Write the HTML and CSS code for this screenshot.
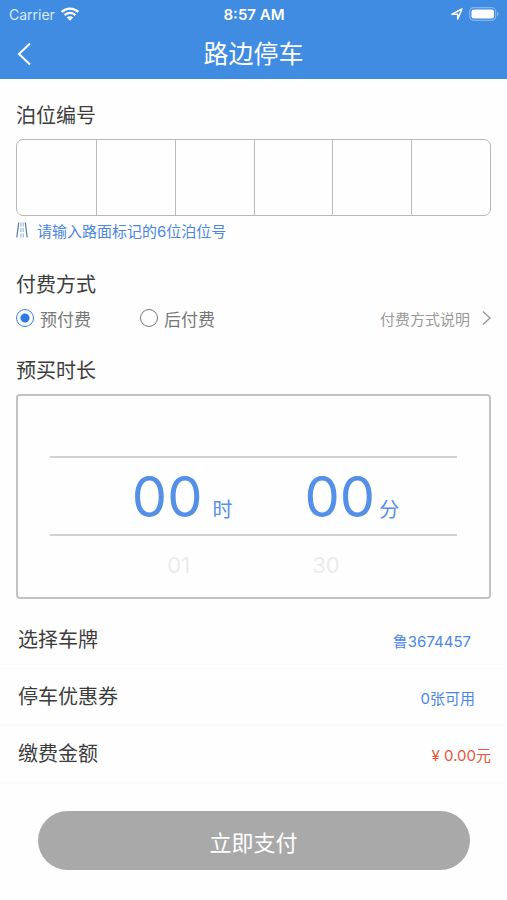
FILE: index.html
```html
<!DOCTYPE html>
<html lang="zh-CN">
<head>
<meta charset="utf-8">
<meta name="viewport" content="width=device-width, initial-scale=1">
<title>路边停车</title>
<link rel="stylesheet" href="styles.css">
</head>
<body>
<header class="header">
  <div class="status">
    <div class="status-left">
      <span>Carrier</span>
      <svg class="wifi" viewBox="0 0 18 14" aria-hidden="true">
        <path d="M.8 5a11.6 11.6 0 0 1 16.4 0M3.6 8.1a7.6 7.6 0 0 1 10.8 0" fill="none" stroke="#fff" stroke-width="2.4"/>
        <path d="M5.8 10.6a4.6 4.6 0 0 1 6.4 0L9 13.8z" fill="#fff"/>
      </svg>
    </div>
    <span class="clock">8:57 AM</span>
    <div class="status-right">
      <svg class="locate" viewBox="0 0 12 12" aria-hidden="true">
        <path d="M1 6.2L11 1L6.7 11V6.2z" fill="none" stroke="#fff" stroke-width="1.5" stroke-linejoin="round"/>
      </svg>
      <svg class="battery" viewBox="0 0 30 14" aria-hidden="true">
        <rect x=".7" y=".7" width="26" height="12.6" rx="4" fill="none" stroke="#84b6ee" stroke-width="1.2"/>
        <rect x="2.5" y="2.5" width="22.5" height="9" rx="2.3" fill="#fff"/>
        <path d="M28 4.8q1.6.7 1.6 2.2t-1.6 2.2z" fill="#84b6ee"/>
      </svg>
    </div>
  </div>
  <div class="nav">
    <button class="back" type="button" aria-label="返回">
      <svg viewBox="0 0 14 24" aria-hidden="true"><path d="M13 1.5L2 12l11 10.5" fill="none" stroke="#fff" stroke-width="2"/></svg>
    </button>
    <h1 class="title">路边停车</h1>
  </div>
</header>
<main>
  <form class="form">
    <section class="spot">
      <h2 class="label" id="spot-label">泊位编号</h2>
      <div class="cells" role="group" aria-labelledby="spot-label">
        <input class="cell" maxlength="1" inputmode="numeric" aria-label="第1位">
        <input class="cell" maxlength="1" inputmode="numeric" aria-label="第2位">
        <input class="cell" maxlength="1" inputmode="numeric" aria-label="第3位">
        <input class="cell" maxlength="1" inputmode="numeric" aria-label="第4位">
        <input class="cell" maxlength="1" inputmode="numeric" aria-label="第5位">
        <input class="cell" maxlength="1" inputmode="numeric" aria-label="第6位">
      </div>
      <p class="hint">
        <svg class="road" viewBox="0 0 12 16" aria-hidden="true">
          <path d="M2.7.5L.8 15.5M9.3.5l1.9 15" fill="none" stroke="#5278a8" stroke-width="1.2"/>
          <path d="M4.9.5v4M4.9 6v4M4.9 11.5v4M7.2.5v4M7.2 6v4M7.2 11.5v4" fill="none" stroke="#7fa3d6" stroke-width=".9"/>
        </svg>
        <span>请输入路面标记的6位泊位号</span>
      </p>
    </section>
    <section class="pay">
      <h2 class="label">付费方式</h2>
      <div class="options">
        <label class="option"><input class="radio" type="radio" name="pay" checked><span>预付费</span></label>
        <label class="option"><input class="radio" type="radio" name="pay"><span>后付费</span></label>
        <a class="explain" href="#pay-help">
          <span>付费方式说明</span>
          <svg class="chevron" viewBox="0 0 9 16" aria-hidden="true"><path d="M1 1.5L8 8l-7 6.5" fill="none" stroke="#999" stroke-width="1.4"/></svg>
        </a>
      </div>
    </section>
    <section class="duration">
      <h2 class="label">预买时长</h2>
      <div class="wheel">
        <div class="current">
          <div class="value hours"><span class="digits">00</span><span class="unit">时</span></div>
          <div class="value minutes"><span class="digits">00</span><span class="unit">分</span></div>
        </div>
        <div class="next"><span>01</span><span>30</span></div>
      </div>
    </section>
    <div class="rows">
      <div class="row"><span class="label">选择车牌</span><button class="choice plate" type="button">鲁3674457</button></div>
      <div class="row"><span class="label">停车优惠券</span><button class="choice coupon" type="button">0张可用</button></div>
      <div class="row"><span class="label">缴费金额</span><output class="amount">¥ 0.00元</output></div>
    </div>
    <button class="submit" type="button">立即支付</button>
  </form>
</main>
</body>
</html>
```
FILE: styles.css
```css
* {
  box-sizing: border-box;
}

body {
  margin: 0;
  background: #fefefe;
  color: #3c3c3c;
  font-family: Inter, "Noto Sans CJK SC", sans-serif;
  font-size: 15px;
}

h1, h2, p {
  margin: 0;
  font-weight: 400;
}

button, input {
  font: inherit;
  color: inherit;
}

button {
  padding: 0;
  border: 0;
  background: none;
}

svg {
  display: block;
}

.header {
  height: 79px;
  background: #3f8ce2;
  color: #fff;
}

.status {
  display: grid;
  grid-template-columns: 1fr auto 1fr;
  align-items: center;
  height: 28px;
  padding: 0 8px 0 9px;
  font-size: 14px;
}

.status-left,
.status-right {
  display: flex;
  align-items: center;
  gap: 6px;
}

.status-left {
  color: #dcebfb;
}

.status-right {
  justify-content: flex-end;
}

.clock {
  font-size: 15px;
  font-weight: 600;
}

.wifi {
  width: 18px;
  height: 14px;
}

.locate {
  width: 12px;
  height: 12px;
}

.battery {
  width: 30px;
  height: 14px;
}

.nav {
  display: grid;
  grid-template-columns: 40px 1fr 40px;
  align-items: center;
  height: 51px;
}

.back {
  padding-left: 17px;
}

.back svg {
  width: 14px;
  height: 24px;
}

.title {
  font-size: 25px;
  line-height: 48px;
  text-align: center;
}

.form {
  padding: 20px 16px;
}

.label {
  font-size: 20px;
  line-height: 34px;
}

.cells {
  display: grid;
  grid-template-columns: repeat(6, 1fr);
  height: 77px;
  margin-top: 6px;
  border: 1px solid #b8b8b8;
  border-radius: 7px;
  overflow: hidden;
}

.cell {
  width: 100%;
  min-width: 0;
  border: 0;
  border-left: 1px solid #bbb;
  background: none;
  font-size: 32px;
  text-align: center;
}

.cell:first-child {
  border-left: 0;
}

.hint {
  display: flex;
  align-items: center;
  gap: 9px;
  height: 28px;
  color: #4a86e0;
}

.road {
  width: 12px;
  height: 16px;
}

.pay {
  margin-top: 24px;
}

.options {
  display: flex;
  align-items: center;
  height: 32px;
  gap: 49px;
}

.option {
  display: flex;
  align-items: center;
  gap: 6px;
  color: #777;
  font-size: 17px;
}

.radio {
  appearance: none;
  width: 18px;
  height: 18px;
  margin: 0;
  border: 1px solid #777;
  border-radius: 50%;
}

.radio:checked {
  border-color: #3d7eea;
  background: radial-gradient(circle, #2f78e8 0 4px, transparent 5px);
}

.explain {
  display: flex;
  align-items: center;
  gap: 12px;
  margin-left: auto;
  color: #999;
  text-decoration: none;
}

.chevron {
  width: 9px;
  height: 16px;
}

.duration {
  margin-top: 20px;
}

.wheel {
  height: 205px;
  margin-top: 6px;
  padding: 60px 32px 0;
  border: 2px solid #c2c2c2;
  border-radius: 4px;
}

.current {
  display: flex;
  justify-content: center;
  gap: 72px;
  height: 80px;
  padding-left: 24px;
  border: solid #d2d2d2;
  border-width: 2px 0;
  color: #548fe8;
}

.value {
  display: flex;
  align-items: baseline;
  line-height: 78px;
}

.hours {
  gap: 10px;
}

.minutes {
  gap: 4px;
}

.digits {
  font-size: 56px;
}

.unit {
  font-size: 20px;
}

.next {
  display: flex;
  justify-content: center;
  gap: 122px;
  color: #ebebeb;
  font-size: 22px;
  line-height: 58px;
}

.rows {
  margin: 13px -16px 0;
}

.row {
  display: flex;
  align-items: center;
  justify-content: space-between;
  height: 57px;
  padding: 0 16px 0 18px;
  border-bottom: 1px solid #f8f8f8;
}

.choice {
  color: #4a86e8;
}

.plate {
  margin-right: 20px;
}

.coupon {
  margin-right: 16px;
}

.amount {
  color: #e8553c;
}

.submit {
  display: block;
  width: calc(100% - 43px);
  height: 59px;
  margin: 28px auto 0;
  border-radius: 30px;
  background: #a9a9a9;
  color: #fff;
  font-size: 22px;
}
```
